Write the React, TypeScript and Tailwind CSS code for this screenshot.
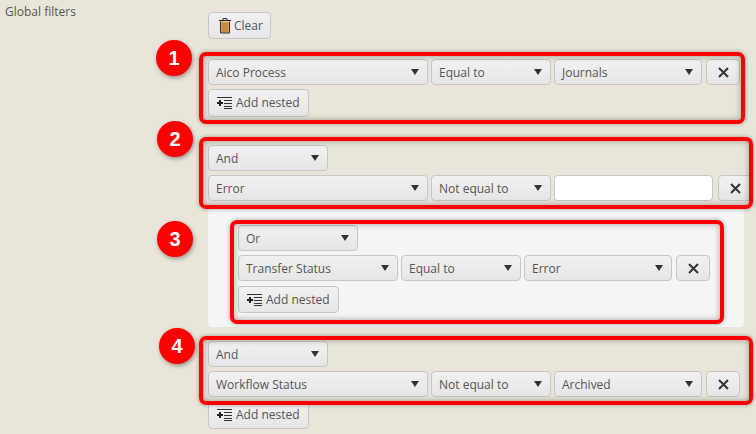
const FONT = "font-['Open_Sans',sans-serif]";

function Caret() {
  return (
    <svg width="8" height="6" viewBox="0 0 8 6" className="shrink-0">
      <path d="M0 0h8L4 6z" fill="#333" />
    </svg>
  );
}

function TrashIcon() {
  return (
    <svg width="12" height="16" viewBox="0 0 12 16">
      <path d="M4 2V.5h4V2" stroke="#333" fill="none" />
      <path d="M0 2.5h12" stroke="#222" />
      <path d="M1.5 3.5h9v11.5h-9z" fill="#e0a050" />
      <path d="M1.5 3.5V15h9V3.5" fill="none" stroke="#333" />
      <path d="M4 4.5v9.5M6 4.5v9.5M8 4.5v9.5" stroke="#a87a3c" />
    </svg>
  );
}

function NestedIcon() {
  return (
    <svg width="15" height="12" viewBox="0 0 15 12">
      <path d="M0 .5h15M7 3.5h8M7 6.5h8M7 9.5h8M7 11.5h8" stroke="#333" />
      <path d="M0 6h6M3 3v6" stroke="#222" strokeWidth="2" />
    </svg>
  );
}

function CloseIcon() {
  return (
    <svg width="11" height="11" viewBox="0 0 11 11">
      <path d="M1 1l9 9M10 1l-9 9" stroke="#333" strokeWidth="2" />
    </svg>
  );
}

function Select({ label, className }: { label: string; className: string }) {
  return (
    <div className={`flex items-center justify-between h-[26px] pl-[7px] pr-2 rounded border border-[#c6c6c4] bg-gradient-to-b from-[#f1f1f1] to-[#e6e6e6] text-[12px] text-[#555] ${className}`}>
      <span className="pt-px">{label}</span>
      <Caret />
    </div>
  );
}

function CloseButton() {
  return (
    <button className="flex items-center justify-center w-[34px] h-[26px] shrink-0 rounded border border-[#c6c6c4] bg-gradient-to-b from-[#f1f1f1] to-[#e6e6e6]">
      <CloseIcon />
    </button>
  );
}

function AddNested({ className = "h-[28px] mt-1" }: { className?: string }) {
  return (
    <button className={`flex items-center gap-1 w-[101px] pl-2 rounded border border-[#c6c6c4] bg-gradient-to-b from-[#f1f1f1] to-[#e6e6e6] text-[12px] text-[#555] ${className}`}>
      <NestedIcon />
      Add nested
    </button>
  );
}

function Row({ first, op, children, firstWidth = "w-[220px]" }: { first: string; op: string; children: React.ReactNode; firstWidth?: string }) {
  return (
    <div className="flex gap-[3px] h-[26px]">
      <Select label={first} className={firstWidth} />
      <Select label={op} className="w-[120px]" />
      {children}
    </div>
  );
}

function Callout({ box, n, badge }: { box: string; n: number; badge: string }) {
  return (
    <>
      <div className={`absolute border-4 border-[#f00] rounded-[7px] shadow-[0_0_4px_rgba(0,0,0,0.35),inset_0_0_6px_rgba(0,0,0,0.35)] ${box}`} />
      <div className={`absolute w-9 h-9 rounded-full bg-[#f00] flex items-center justify-center text-white font-bold text-[20px] font-['Liberation_Sans',sans-serif] shadow-[1px_2px_4px_rgba(0,0,0,0.35)] ${badge}`}>
        {n}
      </div>
    </>
  );
}

export default function App() {
  return (
    <div className={`relative flex w-[756px] h-[434px] overflow-hidden bg-[#e9e5db] ${FONT}`}>
      <div className="w-[208px] shrink-0 pl-[5px] pt-[3px] text-[12px] text-[#555]">Global filters</div>
      <div className="w-[548px] shrink-0 pt-3">
        <button className="flex items-center gap-[3px] w-[63px] h-[27px] pl-[10px] rounded border border-[#c6c6c4] bg-gradient-to-b from-[#f1f1f1] to-[#e6e6e6] text-[12px] text-[#555]">
          <TrashIcon />
          Clear
        </button>

        <div className="mt-5">
          <Row first="Aico Process" op="Equal to">
            <Select label="Journals" className="w-[148px]" />
            <div className="pl-px">
              <CloseButton />
            </div>
          </Row>
          <AddNested />
        </div>

        <div className="mt-7">
          <Select label="And" className="w-[120px]" />
          <div className="mt-1">
            <Row first="Error" op="Not equal to">
              <input className="w-[159px] h-[26px] rounded border border-[#c6c6c4] bg-white" />
              <div className="pl-[2px]">
                <CloseButton />
              </div>
            </Row>
          </div>
        </div>

        <div className="w-[536px] h-[118px] mt-[8px] pl-[30px] pt-[16px] rounded-sm bg-[#f5f5f5]">
          <Select label="Or" className="w-[120px]" />
          <div className="mt-1">
            <Row first="Transfer Status" op="Equal to" firstWidth="w-[160px]">
              <Select label="Error" className="w-[148px]" />
              <div className="pl-px">
                <CloseButton />
              </div>
            </Row>
          </div>
          <AddNested className="h-[27px] mt-[5px]" />
        </div>

        <div className="mt-[14px]">
          <Select label="And" className="w-[120px]" />
          <div className="mt-1">
            <Row first="Workflow Status" op="Not equal to">
              <Select label="Archived" className="w-[148px]" />
              <div className="pl-px">
                <CloseButton />
              </div>
            </Row>
          </div>
          <AddNested />
        </div>
      </div>

      <Callout n={1} box="left-[199px] top-[52px] w-[546px] h-[72px]" badge="left-[156px] top-[40px]" />
      <Callout n={2} box="left-[199px] top-[137px] w-[554px] h-[72px]" badge="left-[157px] top-[121px]" />
      <Callout n={3} box="left-[230px] top-[220px] w-[494px] h-[104px]" badge="left-[157px] top-[221px]" />
      <Callout n={4} box="left-[199px] top-[336px] w-[554px] h-[69px]" badge="left-[159px] top-[328px]" />
    </div>
  );
}
